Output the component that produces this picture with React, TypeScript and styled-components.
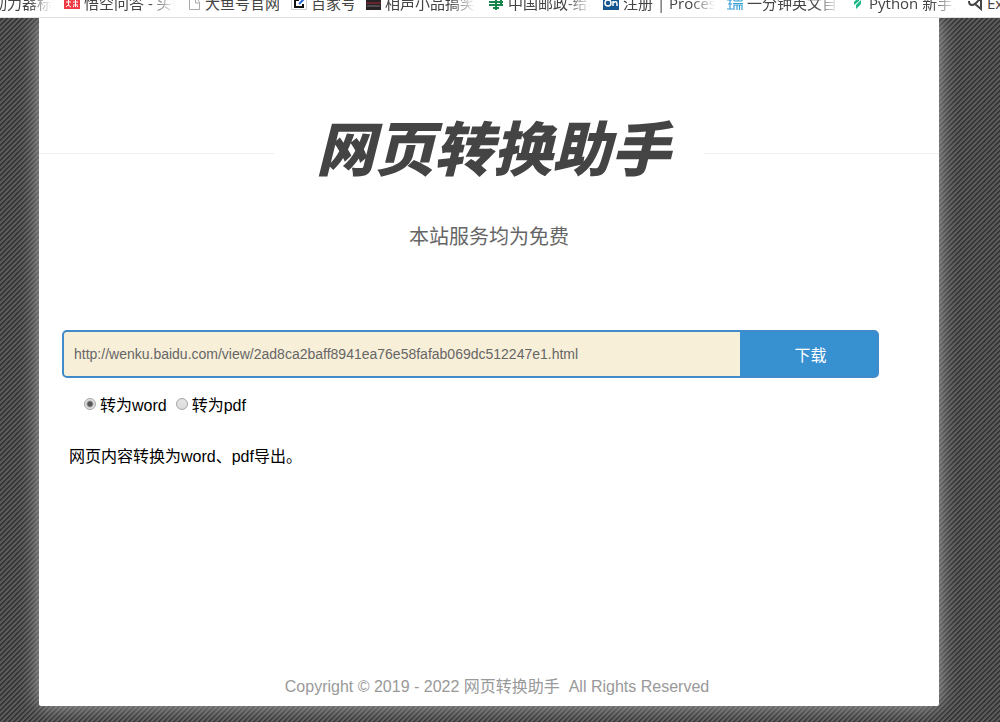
import React from "react";
import styled, { createGlobalStyle } from "styled-components";

const GlobalStyle = createGlobalStyle`
  * { box-sizing: border-box; }
  body {
    margin: 0;
    background: linear-gradient(135deg, #343434 12%, #5a5a5a 22% 40%, #343434 50% 62%, #5a5a5a 72% 90%, #343434) 0 0 / 5px 5px;
    font-family: "Liberation Sans", "Noto Sans CJK SC", sans-serif;
    font-size: 16px;
    color: #000;
  }
`;

const Page = styled.div`
  min-height: 100vh;
  display: flex;
  flex-direction: column;
  overflow: hidden;
`;

const BookmarkBar = styled.nav`
  display: flex;
  align-items: flex-end;
  height: 18px;
  overflow: hidden;
  background: #fff;
  border-bottom: 1px solid #e0e0e0;
  position: relative;
  z-index: 1;
`;

const Bookmark = styled.a<{ $width: number; $fade?: boolean }>`
  flex: none;
  display: flex;
  align-items: center;
  gap: 4px;
  width: ${(p) => p.$width}px;
  height: 25px;
  padding-bottom: 3px;
  color: #444;
  font-family: "Open Sans", "Noto Sans CJK SC", sans-serif;
  font-size: 15px;
  line-height: 22px;
  white-space: nowrap;
  text-decoration: none;
  svg { flex: none; }
  &:first-child { margin-left: -8px; }
  span {
    overflow: hidden;
    margin-right: 12px;
    mask-image: ${(p) => (p.$fade ? "linear-gradient(to left, transparent, #000 24px)" : "none")};
  }
`;

const Sheet = styled.main`
  flex: 1;
  display: flex;
  flex-direction: column;
  margin: 0 61px 16px 39px;
  background: #fff;
  border-radius: 0 0 2px 2px;
  box-shadow: 0 0 20px #aaa;
`;

const Heading = styled.div`
  display: flex;
  align-items: center;
  margin-top: 85px;
  &::before, &::after {
    content: "";
    flex: 1;
    height: 1px;
    background: #eee;
  }
`;

const Title = styled.h1`
  margin: 0;
  padding: 0 0 14px 8px;
  width: 430px;
  text-align: center;
  font-family: "Noto Sans CJK SC", sans-serif;
  font-size: 59px;
  font-style: italic;
  font-weight: 900;
  line-height: 86px;
  color: #444;
`;

const Subtitle = styled.p`
  margin: 18px 0 0;
  text-align: center;
  font-size: 20px;
  line-height: 32px;
  color: #666;
`;

const Form = styled.form`
  margin: 77px 60px 0 23px;
`;

const UrlRow = styled.div`
  display: flex;
  height: 48px;
  border: 2px solid #428bca;
  border-radius: 5px;
  overflow: hidden;
  background: #3790d0;
`;

const UrlInput = styled.input`
  flex: 1;
  min-width: 0;
  border: 0;
  padding: 0 10px;
  background: #f8efd9;
  color: #666;
  font-family: inherit;
  font-size: 14px;
`;

const DownloadButton = styled.button`
  width: 137px;
  padding: 0 0 0 4px;
  border: 0;
  background: #3790d0;
  color: #fff;
  font-family: inherit;
  font-size: 16px;
`;

const Choices = styled.div`
  display: flex;
  gap: 9px;
  margin: 16px 0 0 22px;
`;

const Choice = styled.label`
  display: flex;
  align-items: flex-start;
  gap: 4px;
  line-height: 24px;
`;

const Radio = styled.input`
  appearance: none;
  width: 12px;
  height: 12px;
  margin: 4px 0 0;
  border: 1px solid #a5a5a5;
  border-radius: 50%;
  background: linear-gradient(#e4e4e4, #ddd);
  &:checked {
    background: radial-gradient(circle, #555 0 2px, #e4e4e4 4px);
  }
`;

const Note = styled.p`
  margin: 27px 0 0 30px;
  line-height: 24px;
`;

const Footer = styled.footer`
  margin-top: auto;
  padding: 0 0 7px 16px;
  text-align: center;
  line-height: 24px;
  color: #999;
  white-space: pre;
`;

const icons = {
  toutiao: (
    <svg width="16" height="16" viewBox="0 0 16 16" aria-hidden="true">
      <rect width="16" height="14" fill="#ef3b45" />
      <path d="M2 7h5M4.500 4v6M2 12l2-2 3 2M9 7h5M11.500 4v8M9 10h5M9 12l1-1M13 11l1 1" stroke="#fff" fill="none" />
    </svg>
  ),
  page: (
    <svg width="14" height="16" viewBox="0 0 14 16" aria-hidden="true">
      <path d="M2.500.5h6l4 7v7h-10zM8.500 4v4h4" fill="#fff" stroke="#aaa" />
    </svg>
  ),
  baijia: (
    <svg width="16" height="16" viewBox="0 0 16 16" aria-hidden="true">
      <path d="M.5.5h15v14H.5z" fill="#fff" stroke="#ccc" />
      <path d="M8 5H4v7h8V9" fill="none" stroke="#111" strokeWidth="2" />
      <path d="M8 9l5-5" stroke="#2868d8" strokeWidth="2" />
    </svg>
  ),
  show: (
    <svg width="15" height="16" viewBox="0 0 15 16" aria-hidden="true">
      <path d="M0 1h15v14H0z" fill="#272226" />
      <path d="M0 8h15" stroke="#a32b36" strokeWidth="1" />
      <path d="M1 11h13" stroke="#777" />
    </svg>
  ),
  post: (
    <svg width="16" height="16" viewBox="0 0 16 16" aria-hidden="true">
      <path d="M3 4h11M1 7h14M1 10h14M5 13h6M8 2v13M13 4v6" stroke="#16854c" strokeWidth="2" fill="none" />
    </svg>
  ),
  on: (
    <svg width="16" height="16" viewBox="0 0 16 16" aria-hidden="true">
      <rect width="16" height="15" fill="#17578f" />
      <circle cx="5" cy="8" r="3" fill="none" stroke="#fff" strokeWidth="1.500" />
      <path d="M10 11V6M10 8q4-3 4 1v2" fill="none" stroke="#fff" strokeWidth="1.500" />
    </svg>
  ),
  rui: (
    <svg width="16" height="16" viewBox="0 0 16 16" aria-hidden="true">
      <path d="M0 5h5M1 9h4M0 14h6M3 5v9M7 6h8M7 3v3M11 2v4M15 3v3M6 8.500h10M7 15v-5h8v5M10 10v5M12.500 10v5" fill="none" stroke="#39a1d6" strokeWidth="1.200" />
    </svg>
  ),
  leaf: (
    <svg width="14" height="16" viewBox="0 0 14 16" aria-hidden="true">
      <path d="M3 10V7l5-5v4zM5 14v-4l5-5v4z" fill="#19b787" />
    </svg>
  ),
  ex: (
    <svg width="15" height="16" viewBox="0 0 15 16" aria-hidden="true">
      <path d="M1 6c0 5 4 5 7 2l5-5M7 9l6 5V4" fill="none" stroke="#444" strokeWidth="2" />
    </svg>
  ),
};

type Item = { label: string; width: number; icon?: keyof typeof icons; fade?: boolean };

const bookmarks: Item[] = [
  { label: "动力器标准", width: 72, fade: true },
  { label: "悟空问答 - 头条", width: 123, icon: "toutiao", fade: true },
  { label: "大鱼号官网", width: 104, icon: "page" },
  { label: "百家号", width: 75, icon: "baijia" },
  { label: "相声小品搞笑", width: 122, icon: "show", fade: true },
  { label: "中国邮政-给据", width: 115, icon: "post", fade: true },
  { label: "注册 | Process", width: 124, icon: "on", fade: true },
  { label: "一分钟英文自我", width: 124, icon: "rui", fade: true },
  { label: "Python 新手入", width: 117, icon: "leaf", fade: true },
  { label: "Excel", width: 64, icon: "ex" },
];

export default function App() {
  return (
    <Page>
      <GlobalStyle />
      <BookmarkBar aria-label="书签">
        {bookmarks.map((b) => (
          <Bookmark key={b.label} href="#" $width={b.width} $fade={b.fade}>
            {b.icon && icons[b.icon]}
            <span>{b.label}</span>
          </Bookmark>
        ))}
      </BookmarkBar>
      <Sheet>
        <Heading>
          <Title>网页转换助手</Title>
        </Heading>
        <Subtitle>本站服务均为免费</Subtitle>
        <Form onSubmit={(e) => e.preventDefault()}>
          <UrlRow>
            <UrlInput
              aria-label="网址"
              defaultValue="http://wenku.baidu.com/view/2ad8ca2baff8941ea76e58fafab069dc512247e1.html"
            />
            <DownloadButton type="submit">下载</DownloadButton>
          </UrlRow>
          <Choices>
            <Choice>
              <Radio type="radio" name="format" value="word" defaultChecked />
              转为word
            </Choice>
            <Choice>
              <Radio type="radio" name="format" value="pdf" />
              转为pdf
            </Choice>
          </Choices>
        </Form>
        <Note>网页内容转换为word、pdf导出。</Note>
        <Footer>{"Copyright © 2019 - 2022 网页转换助手  All Rights Reserved"}</Footer>
      </Sheet>
    </Page>
  );
}
